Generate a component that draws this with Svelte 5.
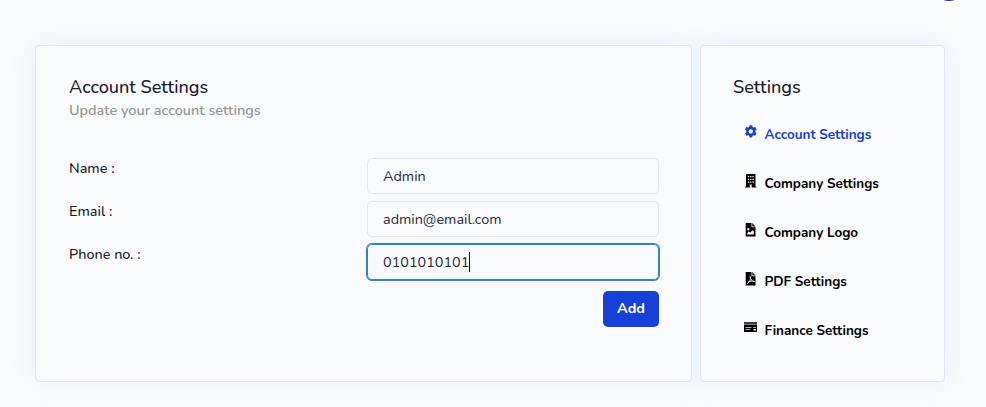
<script>
  const fields = [
    { label: 'Name :', value: 'Admin' },
    { label: 'Email :', value: 'admin@email.com' },
    { label: 'Phone no. :', value: '0101010101', focused: true }
  ];
  const links = [
    { icon: 'gear', text: 'Account Settings', active: true },
    { icon: 'building', text: 'Company Settings' },
    { icon: 'image', text: 'Company Logo' },
    { icon: 'pdf', text: 'PDF Settings' },
    { icon: 'card', text: 'Finance Settings' }
  ];
</script>

<div class="page">
  <span class="avatar"></span>
  <main class="card account">
    <h1>Account Settings</h1>
    <p class="sub">Update your account settings</p>
    <form>
      {#each fields as f}
        <div class="row">
          <span class="label">{f.label}</span>
          <div class="input" class:focused={f.focused}>
            <span>{f.value}</span>{#if f.focused}<i class="caret"></i>{/if}
          </div>
        </div>
      {/each}
      <div class="actions"><button type="button">Add</button></div>
    </form>
  </main>
  <aside class="card side">
    <h1>Settings</h1>
    <nav>
      {#each links as l}
        <a href="#top" class:active={l.active}>
          <svg viewBox="0 0 14 14" width="14" height="14" fill="currentColor">
            {#if l.icon === 'gear'}
              <path fill-rule="evenodd" d="M5.500.3h2.600l.4 1.700 1 .6 1.700-.6 1.400 2.400-1.300 1.200v1.600l1.300 1.200-1.400 2.400-1.700-.6-1 .6-.4 1.700H5.500l-.4-1.700-1-.6-1.700.6L1 8.400l1.300-1.200V5.600L1 4.400 2.400 2l1.700.6 1-.6zM6.800 4.200a2.200 2.200 0 1 0 0 4.400 2.200 2.200 0 0 0 0-4.400z" />
            {:else if l.icon === 'building'}
              <path fill-rule="evenodd" d="M2 0h9.500v12.700h1v.8H7.700v-3H5.800v3H1v-.8h1zM3.900 2v1.300h1.300V2zm2.200 0v1.300h1.300V2zm2.300 0v1.300h1.300V2zM3.900 4.700V6h1.300V4.700zm2.200 0V6h1.300V4.700zm2.300 0V6h1.300V4.700zM3.900 7.400v1.300h1.300V7.400zm2.200 0v1.300h1.300V7.400zm2.300 0v1.300h1.300V7.400z" />
            {:else if l.icon === 'image'}
              <path fill-rule="evenodd" d="M1.700 0H7.500v4.300h4v9.200H1.700zM3.300 10.300v1.300h6.500V8.200L8.600 7.300 6.300 9.600 4.700 8.600zM4.400 5a1.200 1.200 0 1 0 0 2.400 1.200 1.200 0 0 0 0-2.400z" />
              <path d="M8.300 0 11.500 3.500H8.300z" />
            {:else if l.icon === 'pdf'}
              <path d="M1.700 0H7.500v4.300h4v9.200H1.700zM8.300 0l3.200 3.500H8.300z" />
              <path d="M6.200 4.500c.8 2 .2 4.500-2.700 7.200M6.200 5c.2 2.500 1.500 4.300 4.200 4.700M4.200 10c1.800-.9 3.700-1.100 5.900-.6" fill="none" stroke="#f9fafc" stroke-width=".9" stroke-linecap="round" />
            {:else}
              <path d="M0 1.300h13v1.400H0zM0 3.600h13v7.500H0z" />
              <path d="M1.500 6.500h6M1.500 8.500h4.500M9 6.500h3" stroke="#aab0b7" />
              <path d="M9.500 8H12v1.500H9.500z" fill="#f9fafc" />
            {/if}
          </svg>
          <span>{l.text}</span>
        </a>
      {/each}
    </nav>
  </aside>
</div>

<style>
  :global(body) { background: #f9fafc; }
  .page {
    box-sizing: border-box;
    position: relative;
    isolation: isolate;
    display: flex;
    gap: 8px;
    width: 986px;
    height: 407px;
    padding: 45px 41px 25px 35px;
    overflow: hidden;
    color: #1a202c;
    font-family: Nunito, "Open Sans", sans-serif;
  }
  .avatar {
    position: absolute;
    top: -31px;
    left: 933px;
    width: 32px;
    height: 32px;
    border-radius: 50%;
    background: #3515d1;
  }
  .card {
    box-sizing: border-box;
    position: relative;
    height: 337px;
    padding: 30px 32px;
    border: 1px solid #e0e7f0;
    border-radius: 4px;
    background: #f9fafc;
  }
  /* The shadow lies beneath both cards, so neither darkens the other. */
  .card::before {
    content: "";
    position: absolute;
    inset: -1px;
    z-index: -1;
    border-radius: 4px;
    box-shadow: 0 0 28px rgba(59, 140, 235, .09);
  }
  .account { width: 657px; padding-left: 33px; }
  .side { width: 245px; }
  h1 {
    margin: 0;
    font-size: 18.1px;
    font-weight: 500;
    line-height: 22px;
    white-space: nowrap;
  }
  .sub {
    margin: 1px 0 0;
    color: #979797;
    font-size: 14.4px;
    font-weight: 600;
    line-height: 22px;
  }
  form { margin-top: 37px; }
  .row {
    display: flex;
    justify-content: space-between;
    height: 36px;
    margin-bottom: 7px;
  }
  .label { font-size: 14.4px; font-weight: 500; line-height: 21px; }
  .input {
    box-sizing: border-box;
    display: flex;
    align-items: center;
    width: 292px;
    height: 36px;
    padding: 0 15px;
    border: 1px solid #e2e8f0;
    border-radius: 5px;
    color: #1f2937;
    font-size: 14.4px;
  }
  .focused { border-color: #3182ce; box-shadow: 0 0 0 1px #3182ce; }
  .caret { width: 1px; height: 20px; background: #111; }
  .actions { display: flex; justify-content: flex-end; margin-top: 11px; }
  button {
    width: 56px;
    height: 36px;
    padding: 0 0 2px;
    border: 0;
    border-radius: 5px;
    background: #1740d8;
    color: #fff;
    font: 700 14.4px/33px Nunito, "Open Sans", sans-serif;
  }
  nav {
    display: flex;
    flex-direction: column;
    gap: 29px;
    margin: 27px 0 0 11px;
  }
  a {
    display: flex;
    gap: 6.5px;
    height: 20px;
    color: #000;
    font-size: 13.5px;
    font-weight: 700;
    line-height: 20px;
    text-decoration: none;
    white-space: nowrap;
  }
  a svg { flex: none; }
  .active { color: #1740d8; }
</style>
